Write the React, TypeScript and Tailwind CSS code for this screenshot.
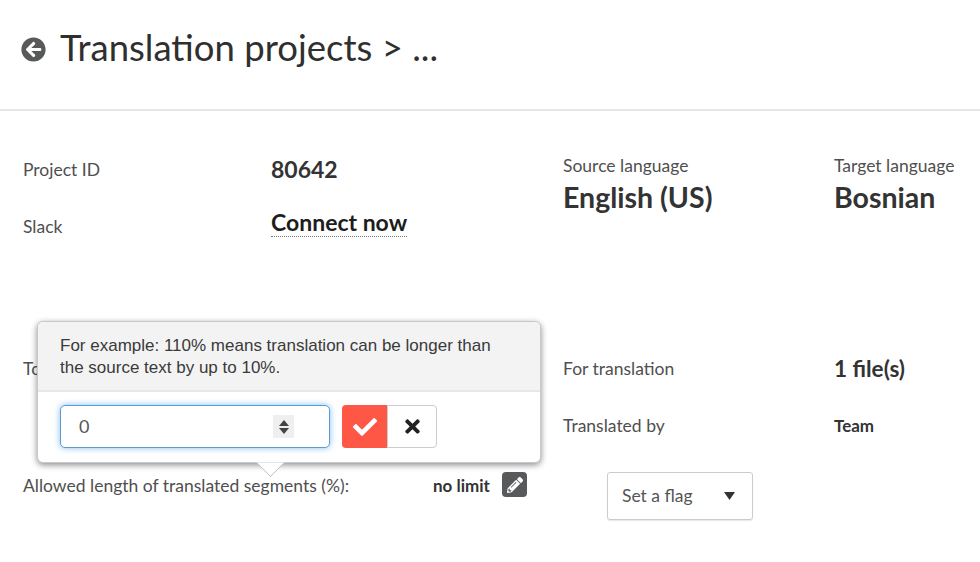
import React from 'react';
import { FaArrowCircleLeft, FaCheck, FaTimes, FaPencilAlt } from 'react-icons/fa';

const Label = ({ children }: { children: React.ReactNode }) => (
  <div className="text-[17.5px] leading-5 whitespace-nowrap text-[#4f4f4f]">{children}</div>
);

const Popover = () => {
  return (
    <div className="absolute left-[37px] top-[321px] w-[504px] h-[142px] rounded-[6px] border border-[#c8c8c8] bg-white shadow-[0_2px_6px_rgba(0,0,0,0.45)] font-['Liberation_Sans',sans-serif]">
      <div className="h-[70px] rounded-t-[6px] border-b-2 border-[#e8e8e8] bg-[#f3f3f3] pl-[22px] pt-[13px] text-[17px] leading-[22px] text-[#3a3a3a]">
        For example: 110% means translation can be longer than<br />the source text by up to 10%.
      </div>
      <div className="flex items-center pl-[22px] pt-[13px]">
        <div className="flex h-[43px] w-[270px] items-center justify-between rounded-[5px] border border-[#5b9bd5] bg-white pl-[18px] pr-[35px] shadow-[0_0_6px_rgba(102,175,233,0.8)] font-['Lato',sans-serif] text-[18px] text-[#555]">
          <span>0</span>
          <span className="flex h-[23px] w-[21px] flex-col items-center justify-center gap-[2px] bg-[#efefef]">
            <svg width="10" height="6" viewBox="0 0 10 6"><path d="M5 0L10 6H0z" fill="#444" /></svg>
            <svg width="10" height="6" viewBox="0 0 10 6"><path d="M0 0H10L5 6z" fill="#444" /></svg>
          </span>
        </div>
        <div className="ml-[12px] flex h-[43px] w-[45px] items-center justify-center rounded-l-[4px] bg-[#ff5745] text-white">
          <FaCheck className="text-[24px]" />
        </div>
        <div className="flex h-[43px] w-[50px] items-center justify-center rounded-r-[4px] border border-[#ccc] bg-white text-[#222]">
          <FaTimes className="text-[21px]" />
        </div>
      </div>
      <div className="absolute left-[222px] top-[130px] h-[21px] w-[21px] rotate-45 border-b border-r border-[#bbb] bg-white [clip-path:polygon(100%_0,100%_100%,0_100%)]" />
    </div>
  );
};

export default function App() {
  return (
    <div className="relative h-[562px] w-[980px] overflow-hidden bg-white font-['Lato',sans-serif] text-[#333]">
      <div className="flex h-[111px] items-start gap-[14px] border-b-2 border-[#e6e6e6] pl-[21px] pt-[25px]">
        <FaArrowCircleLeft className="mt-[12px] text-[25px] text-[#58595b]" />
        <h1 className="text-[36.5px] leading-[44px] whitespace-nowrap text-[#2f2f2f]">Translation projects &gt; ...</h1>
      </div>

      <div className="grid grid-cols-[248px_292px_271px_1fr] pl-[23px] pt-[45px]">
        <div className="pt-[4px]"><Label>Project ID</Label></div>
        <div className="text-[23px] leading-[26px] font-bold text-[#333]">80642</div>
        <div className="row-span-2">
          <Label>Source language</Label>
          <div className="mt-[3px] text-[28.5px] leading-[36px] whitespace-nowrap font-bold text-[#333]">English (US)</div>
        </div>
        <div className="row-span-2">
          <Label>Target language</Label>
          <div className="mt-[3px] text-[28.5px] leading-[36px] font-bold text-[#333]">Bosnian</div>
        </div>
        <div className="pt-[35px]"><Label>Slack</Label></div>
        <div className="pt-[26px]">
          <span className="inline-block border-b border-dotted border-[#777] text-[23px] leading-7 whitespace-nowrap font-bold text-[#1d1d1d]">Connect now</span>
        </div>
      </div>

      <div className="grid grid-cols-[248px_292px_271px_1fr] pl-[23px] pt-[121px]">
        <div className="pt-[1px]"><Label>Total</Label></div>
        <div />
        <div className="pt-[1px]"><Label>For translation</Label></div>
        <div className="pt-[1px] text-[22.5px] leading-5 font-bold text-[#333]">1 file(s)</div>
        <div />
        <div />
        <div className="pt-[37px]"><Label>Translated by</Label></div>
        <div className="pt-[37px] text-[17px] leading-5 font-bold text-[#333]">Team</div>
      </div>

      <div className="flex items-start pl-[23px] pt-[36px]">
        <div className="w-[410px] pt-[4px]"><Label>Allowed length of translated segments (%):</Label></div>
        <div className="w-[69px] pt-[4px] text-[17px] leading-5 whitespace-nowrap font-bold text-[#333]">no limit</div>
        <div className="flex h-[25px] w-[25px] items-center justify-center rounded-[4px] bg-[#58595b] text-white">
          <FaPencilAlt className="text-[16px]" />
        </div>
        <div className="ml-[80px] flex h-[48px] w-[146px] items-center justify-between rounded-[3px] border border-[#ccc] pl-[14px] pr-[17px] text-[17.5px] text-[#555] shadow-[0_1px_1px_rgba(0,0,0,0.1)]">
          <span>Set a flag</span>
          <svg width="11" height="8" viewBox="0 0 11 8"><path d="M0 0H11L5.5 8z" fill="#333" /></svg>
        </div>
      </div>

      <Popover />
    </div>
  );
}
